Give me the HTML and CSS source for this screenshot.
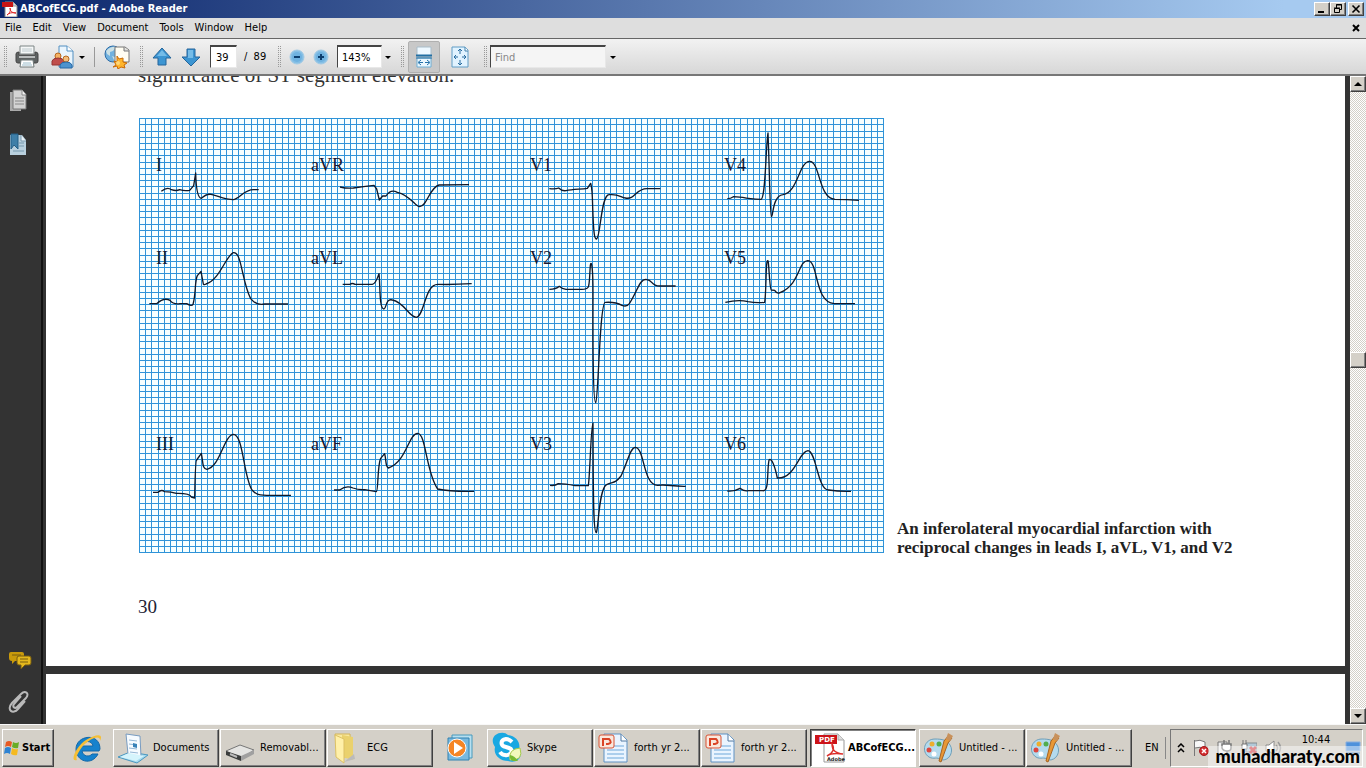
FILE: index.html
```html
<!DOCTYPE html>
<html lang="en">
<head>
<meta charset="utf-8">
<title>ABCofECG.pdf - Adobe Reader</title>
<link rel="stylesheet" href="styles.css">
</head>
<body>
<header class="titlebar">
  <svg class="title-icon" width="16" height="16" viewBox="0 0 16 16" aria-hidden="true"><path d="M3 1h8l4 4v11H3z" fill="#fff" stroke="#888"/><path d="M11 1v4h4" fill="#ddd" stroke="#999"/><path d="M0 1h11v5H0z" fill="#c81414"/><path d="M5 14c3-2 4-5 3-7 0 3 2 5 6 5-4-1-7 0-9 2" fill="none" stroke="#d22"/></svg>
  <h1 class="title">ABCofECG.pdf - Adobe Reader</h1>
  <div class="window-buttons">
    <button class="win-btn" aria-label="Minimize"><svg width="12" height="10" viewBox="0 0 12 10"><path d="M2 7h6v2H2z"/></svg></button>
    <button class="win-btn" aria-label="Restore"><svg width="12" height="10" viewBox="0 0 12 10"><path d="M4.500 4V.5h5v5H8M4 1h6M2.500 4.500h5v4h-5zM2 4h6" fill="none" stroke="#000"/></svg></button>
    <button class="win-btn win-close" aria-label="Close"><svg width="12" height="10" viewBox="0 0 12 10"><path d="M2.500 1.500l7 7M9.500 1.500l-7 7" stroke="#000" stroke-width="1.600"/></svg></button>
  </div>
</header>
<nav class="menubar">
  <button>File</button><button>Edit</button><button>View</button><button>Document</button><button>Tools</button><button>Window</button><button>Help</button>
  <button class="doc-close" aria-label="Close document"><svg width="8" height="8" viewBox="0 0 8 8"><path d="M1 1l6 6M7 1L1 7" stroke="#000" stroke-width="2"/></svg></button>
</nav>
<div class="toolbar">
  <span class="grip"></span>
  <button class="tool print" aria-label="Print"><svg width="24" height="24" viewBox="0 0 24 24"><path d="M5 1h14v8H5z" fill="#f5f7f7" stroke="#7c8585"/><path d="M7 4h10M7 6h10" stroke="#bcc8cc"/><path d="M1 9q0-2 3-2v3h16V7q3 0 3 2v7q0 2-2 2H3q-2 0-2-2z" fill="#5e6262" stroke="#444"/><path d="M4 12h16" stroke="#b9bcbc" stroke-width="2"/><path d="M6 15h12l1 7H5z" fill="#fff" stroke="#6f7878"/><path d="M8 18h8M7 20h10" stroke="#9bbccb"/></svg></button>
  <button class="tool share" aria-label="Collaborate"><svg width="24" height="24" viewBox="0 0 24 24"><path d="M8 1h8l6 5v16H8z" fill="#eaf5fd" stroke="#5290c2"/><path d="M16 1v5h6" fill="#fff" stroke="#5290c2"/><circle cx="7" cy="11" r="3" fill="#f5b263" stroke="#b66720"/><path d="M1 20v-4q1-3 6-3 5 0 6 3v4z" fill="#c04d4b" stroke="#963432"/><circle cx="15" cy="14" r="3" fill="#f2be7c" stroke="#b66720"/><path d="M9 23v-3q1-3 6-3t6 3v3z" fill="#4d93ce" stroke="#2869a6"/></svg></button>
  <button class="drop" aria-label="Collaborate options"></button>
  <span class="divider"></span>
  <button class="tool globe" aria-label="Online services"><svg width="26" height="24" viewBox="0 0 26 24"><circle cx="9" cy="9" r="8" fill="#70b1df" stroke="#2d6ba6"/><path d="M2 6q5-5 10-4l-3 4-3 1v4l-3-2zM8 11l5 2-2 4z" fill="#cbe0e5"/><path d="M11 2h10l4 3v12H11z" fill="#fffdf2" stroke="#777"/><path d="M20 2v4h5" fill="#ddd" stroke="#777"/><path d="M13 11l2 3 4-1v4l4 1-3 2 1 3-4-1-3 2-1-3-4 1 3-2-2-4 3 1z" fill="#ffb52c" stroke="#c96a07"/><circle cx="14" cy="18" r="2" fill="#ffd779"/></svg></button>
  <span class="grip"></span>
  <button class="tool arrow-tool" aria-label="Previous page"><svg width="20" height="20" viewBox="0 0 20 20"><path d="M10 1l9 10h-5v7H6v-7H1z" fill="#3c95d2" stroke="#24659b"/><path d="M10 3l5 6H5z" fill="#75bce8"/></svg></button>
  <button class="tool arrow-tool" aria-label="Next page"><svg width="20" height="20" viewBox="0 0 20 20"><path d="M10 19l9-9h-5V2H6v8H1z" fill="#3c95d2" stroke="#24659b"/><path d="M7 3h5v8H4h3z" fill="#75bce8"/></svg></button>
  <input class="field page-no" aria-label="Page number" value="39">
  <span class="page-total">/&nbsp; 89</span>
  <span class="grip"></span>
  <button class="tool zoom-tool" aria-label="Zoom out"><svg width="16" height="16" viewBox="0 0 16 16"><circle cx="8" cy="8" r="7" fill="#85bfe5" stroke="#a3cbe5"/><circle cx="8" cy="8" r="5" fill="#6fb2e0"/><path d="M5 8h6" stroke="#0c3e6e" stroke-width="2"/></svg></button>
  <button class="tool zoom-tool" aria-label="Zoom in"><svg width="16" height="16" viewBox="0 0 16 16"><circle cx="8" cy="8" r="7" fill="#85bfe5" stroke="#a3cbe5"/><circle cx="8" cy="8" r="5" fill="#6fb2e0"/><path d="M5 8h6M8 5v6" stroke="#0c3e6e" stroke-width="2"/></svg></button>
  <input class="field zoom-level" aria-label="Zoom level" value="143%">
  <button class="drop" aria-label="Zoom levels"></button>
  <span class="grip"></span>
  <button class="tool fit-width" aria-label="Fit width"><svg width="18" height="22" viewBox="0 0 18 22"><path d="M2 1h14v9H2z" fill="#eef8ff" stroke="#a9bdca"/><path d="M1 9.500h16" stroke="#226fa3" stroke-width="2"/><path d="M2 12h14v9H2z" fill="#eaf7ff" stroke="#6faed4"/><path d="M1 12h16" stroke="#226fa3"/><path d="M4 16.500h4M10 16.500h4M6 14l-3 2.500 3 2.500M12 14l3 2.500-3 2.500" fill="none" stroke="#2673ab"/></svg></button>
  <button class="tool fit-page" aria-label="Fit page"><svg width="18" height="22" viewBox="0 0 18 22"><path d="M1 1h13l3 3v17H1z" fill="#e1f3ff" stroke="#609dc6"/><path d="M14 1v4h3" fill="#fff" stroke="#3e80ad"/><path d="M9 3v5M9 14v5M3 11h4M11 11h4M7 5l2-2 2 2M7 17l2 2 2-2M5 9l-2 2 2 2M13 9l2 2-2 2" fill="none" stroke="#286c9f"/></svg></button>
  <span class="grip"></span>
  <input class="field find" aria-label="Find" placeholder="Find">
  <button class="drop" aria-label="Find options"></button>
</div>
<main class="workspace">
  <aside class="sidebar">
    <button aria-label="Pages"><svg width="20" height="24" viewBox="0 0 20 24"><path d="M2 3h11v19H2z" fill="#aaa"/><path d="M5 1h9l4 4v15H5z" fill="#d3d3d3" stroke="#777"/><path d="M14 1v5h4" fill="#f3f3f3" stroke="#888"/><path d="M7 9h9M7 12h9M7 15h9" stroke="#888"/></svg></button>
    <button aria-label="Bookmarks"><svg width="20" height="24" viewBox="0 0 20 24"><path d="M2 2h12l4 5v15H2z" fill="#b9d0de"/><path d="M13 2v6h5" fill="#eaf2f7" stroke="#7898ac"/><path d="M11 10h5M11 13h5M5 18h11" stroke="#7799ae"/><path d="M3 1h7v15l-4-4-3 4z" fill="#3f7fa8" stroke="#255e85"/></svg></button>
    <button class="comments" aria-label="Comments"><svg width="24" height="20" viewBox="0 0 24 20"><path d="M3 2h11q2 0 2 2v5q0 2-2 2H7l-3 3v-3q-3 0-3-3V4q0-2 2-2z" fill="#c99a0b"/><path d="M11 6h10q2 0 2 2v5q0 2-2 2h-4l-4 4v-4h-2q-2 0-2-2V8q0-2 2-2z" fill="#e4b81d" stroke="#755b12"/><path d="M4 5h9M12 9h8M12 12h8" stroke="#765c10"/></svg></button>
    <button aria-label="Attachments"><svg width="22" height="24" viewBox="0 0 22 24"><path d="M13 6l-7 8c-2 3 1 5 3 3l9-9c4-5-1-8-5-4L4 13c-6 7 1 12 6 6l7-8" fill="none" stroke="#b9b9b9" stroke-width="2"/></svg></button>
  </aside>
  <div class="document">
    <article class="page first-page">
      <p class="body-text">significance of ST segment elevation.</p>
      <figure class="figure">
        <svg class="ecg" width="745" height="435" viewBox="0 0 745 435" role="img" aria-label="Twelve-lead electrocardiogram">
          <defs><pattern id="grid" width="31" height="31" patternUnits="userSpaceOnUse"><rect width="31" height="31" fill="#f6ffff"/><path d="M.5 0v31M6.500 0v31M12.500 0v31M19.500 0v31M25.500 0v31M0 .5h31M0 6.500h31M0 13.500h31M0 19.500h31M0 25.500h31" stroke="#2f93d8"/></pattern></defs>
          <rect width="745" height="435" fill="url(#grid)"/>
          <g class="trace">
            <g transform="translate(-9 -8) scale(.33333)">
              <path d="M94 244q18-15 30-5 15 5 25 0 15 5 30 2l12-14 6-38q2 75 17 76 15-14 29-12c20 4 40 16 68 16 20-4 30-30 60-30h15"/>
              <path d="M630 231q20 5 40 3 30-5 62-8l8 11 8 33 10-12 10 0q14-22 34-11c40 9 55 44 67 43 23-2 29-57 58-65q45-1 90-1"/>
              <path d="M58 581h22q22-20 40-10 10 13 30 10h20q15 9 19 2c9-30 5-70 13-86l11-13 7 38q3 4 8 0c40-11 60-85 82-94 25-5 25 85 52 138q18 22 42 16h70"/>
              <path d="M638 523h22q7-5 15 0h52q10-1 20-32c4 30 0 107 15 106 8-3 5-33 25-27 35 5 50 52 72 52 25-5 25-100 65-99 30 1 50 1 101-2"/>
            </g>
            <g transform="translate(371 -8) scale(.33333)">
              <path d="M118 236q20 2 28-2 10 10 22 8c20-5 40-4 64-7l10-15q5 15 6 70c3 90 6 97 12 97 12-7 13-136 38-133 30-3 35 10 48 10 30 6 30-28 65-28h40"/>
              <path d="M118 538q20 0 30-9 8 8 20 9h45c30 1 23-7 28-72 4-20 8 15 8 82 0 40-2 330 8 330 8-5 12-302 29-301q30-2 50 9 14 6 22-5c25-38 30-73 50-73 24 2 12 21 43 20h46"/>
              <path d="M652 266q10 0 18-6l28 2q20 5 55 6c14-3 14-158 21-199 4 90 6 250 10 251 6 0 3-62 35-66 45-7 48-99 80-100 32 1 26 112 76 114q35 0 72 3"/>
              <path d="M646 577q40-9 68-2 25 5 50 2c5-25 3-128 9-125 4-5 5 85 11 88l10 1q7 12 16 7c61-25 54-95 83-96 33 0 19 125 80 129h62"/>
            </g>
            <g transform="translate(-9 217) scale(.33333)">
              <path d="M69 472h15q10-10 20-2 20 0 35 5 40-1 45 11l10 3q2-112 6-114l14-20c6 30 2 45 17 48 40-8 50-101 79-105 30 0 30 125 56 167 18 20 30 14 44 16h73"/>
              <path d="M612 465h17q20-15 40-6 15 6 35 5l35 6c6 0 3-78 13-100l12-14c6 25 1 35 11 43 55-19 60-102 88-104 25 0 25 118 60 167 35 8 68 7 109 7"/>
            </g>
            <g transform="translate(371 217) scale(.33333)">
              <path d="M120 451q15 2 25-5 20 0 50 6h40c5-30 8-188 14-188 1 150-1 328 10 329 7-15 7-132 31-144 20-9 25-3 43-26 20-41 27-84 42-86 30 0 22 112 68 114 30-4 40 4 84 3"/>
              <path d="M652 468q22 2 38-8 12 10 25 7h43c20 4 12-52 19-92 8-8 18 20 25 54 55 2 64-80 92-82 25 1 29 120 62 118q30 5 67 4"/>
            </g>
          </g>
          <g class="lead"><text x="17" y="53">I</text><text x="172" y="53">aVR</text><text x="391" y="53">V1</text><text x="585" y="53">V4</text><text x="17" y="146">II</text><text x="172" y="146">aVL</text><text x="391" y="146">V2</text><text x="585" y="146">V5</text><text x="17" y="332">III</text><text x="172" y="332">aVF</text><text x="391" y="332">V3</text><text x="585" y="332">V6</text></g>
        </svg>
        <figcaption>An inferolateral myocardial infarction with<br>reciprocal changes in leads I, aVL, V1, and V2</figcaption>
      </figure>
      <p class="page-number">30</p>
    </article>
    <article class="page next-page"></article>
  </div>
  <div class="scrollbar">
    <button aria-label="Scroll up"><svg width="8" height="4" viewBox="0 0 8 4"><path d="M4 0l4 4H0z"/></svg></button>
    <span class="track above"></span><button aria-label="Scroll position"></button><span class="track below"></span>
    <button aria-label="Scroll down"><svg width="8" height="4" viewBox="0 0 8 4"><path d="M0 0h8L4 4z"/></svg></button>
  </div>
</main>
<footer class="taskbar">
  <button class="task start"><svg width="17" height="18" viewBox="0 0 17 18"><path d="M2 3q3-2 6 0L7 8q-3-2-6 0z" fill="#e75a23"/><path d="M9 3q3 2 6 0l-1 6q-3 1-6-1z" fill="#69ad27"/><path d="M1 9q3-2 6 0l-1 6q-3-2-6 0z" fill="#2e83d2"/><path d="M8 9q3 2 6 1l-1 6q-3 1-6-1z" fill="#f5ba20"/></svg>Start</button>
  <button class="quick ie" aria-label="Internet Explorer"><svg width="32" height="32" viewBox="0 0 32 32"><path d="M27 19H10c1 6 8 6 10 3h6C20 34 4 30 4 17 4 3 28 0 28 17zM10 14h11c-1-6-10-6-11 0z" fill="#1682cd" stroke="#1468a9"/><path d="M5 28C-3 31 4 14 14 8S32 1 28 9c1-8-14-1-20 9-4 6-4 9-3 10z" fill="#f5bf36"/></svg></button>
  <button class="task"><svg width="32" height="32" viewBox="0 0 32 32"><path d="M1 25l12-5 18 3-11 8z" fill="#a7dbf0" stroke="#4b97bf"/><path d="M9 2l14 2 1 21-13-3z" fill="#f6fbff" stroke="#799cc1"/><path d="M12 8l8 1M12 12l8 1M12 16l8 1M13 20l8 1" stroke="#94b7d6"/><path d="M16 11l4 1v4l-4-1z" fill="#3882b8"/><path d="M3 25l9-4 15 3-8 5z" fill="#d5f4fc"/></svg>Documents</button>
  <button class="task"><svg width="32" height="32" viewBox="0 0 32 32"><path d="M2 19l14-6 14 5-13 9z" fill="#e4e4e2" stroke="#777"/><path d="M2 19l15 5v5L2 23z" fill="#3b3d3d"/><path d="M17 24l13-6v4l-13 7z" fill="#a0a0a0"/><path d="M6 22l7 3" stroke="#bbb" stroke-width="2"/></svg>Removabl...</button>
  <button class="task"><svg width="32" height="32" viewBox="0 0 32 32"><path d="M4 2h15l1 23H7z" fill="#f9e99e" stroke="#d3b459"/><path d="M11 3l11 2v23l-11-3z" fill="#ead16d"/><path d="M4 3l9 4v24l-8-6z" fill="#fff0a9" stroke="#dcc165"/><path d="M13 30l11-3-1-5" fill="#bbb"/></svg>ECG</button>
  <button class="quick media" aria-label="Windows Media Player"><svg width="28" height="28" viewBox="0 0 28 28"><path d="M6 1h20v23H6z" fill="#b8dfef" stroke="#469abd"/><path d="M2 4h21v22H2z" fill="#78b9df" stroke="#3082b1"/><circle cx="11" cy="14" r="9" fill="#f58525" stroke="#fff"/><path d="M8 8l9 6-9 6z" fill="#fff"/></svg></button>
  <button class="task"><svg width="32" height="32" viewBox="0 0 32 32"><path d="M9 1q5-1 8 2c8 1 13 7 11 15 5 8-3 14-11 11C9 29 2 23 4 15-1 8 3 2 9 1z" fill="#19a8e2"/><path d="M21 10q-3-3-6-3c-6 1-6 7 0 8l3 1c6 2 1 8-4 7q-3 0-5-3" fill="none" stroke="#fff" stroke-width="4"/><path d="M19 28q-2-11 10-12 4 13-10 12" fill="#f2f8bd" stroke="#a8cb4c"/><path d="M19 23q5 1 8 6h-5q-4-2-3-6" fill="#77ba32"/></svg>Skype</button>
  <button class="task"><svg width="32" height="32" viewBox="0 0 32 32"><path d="M6 2h17l6 6v22H6z" fill="#eaf4ff" stroke="#5e91c3"/><path d="M23 2v7h6" fill="#fff" stroke="#5079a2"/><path d="M9 14h17M9 18h17M9 22h17M9 26h17" stroke="#6fa8da"/><rect x="1" y="3" width="15" height="13" rx="2" fill="#fae8dd" stroke="#d85233"/><path d="M5 14V7h6q4 4-1 5H8" fill="none" stroke="#da4426" stroke-width="2"/></svg>forth yr 2...</button>
  <button class="task"><svg width="32" height="32" viewBox="0 0 32 32"><path d="M6 2h17l6 6v22H6z" fill="#eaf4ff" stroke="#5e91c3"/><path d="M23 2v7h6" fill="#fff" stroke="#5079a2"/><path d="M9 14h17M9 18h17M9 22h17M9 26h17" stroke="#6fa8da"/><rect x="1" y="3" width="15" height="13" rx="2" fill="#fae8dd" stroke="#d85233"/><path d="M5 14V7h6q4 4-1 5H8" fill="none" stroke="#da4426" stroke-width="2"/></svg>forth yr 2...</button>
  <button class="task active"><svg width="32" height="32" viewBox="0 0 32 32"><path d="M10 2h14l6 6v22H10z" fill="#fff" stroke="#999"/><path d="M24 2v6h6" fill="#ddd" stroke="#aaa"/><path d="M1 3h22v9H1z" fill="#cc1319"/><path d="M13 24c6-3 8-7 5-12 0 7 4 9 11 10-6-1-12-1-16 2" fill="none" stroke="#dc302d" stroke-width="1.500"/><text x="5" y="10" class="pdf-mark">PDF</text><text x="13" y="29" class="adobe-mark">Adobe</text></svg>ABCofECG...</button>
  <button class="task"><svg width="32" height="32" viewBox="0 0 32 32"><path d="M12 7C1 7-2 20 6 25c5 3 8-1 12 3 9 1 13-9 9-15-3-5-8-6-15-6z" fill="#b4daed" stroke="#6e9fb9"/><circle cx="6" cy="18" r="2.500" fill="#de463e"/><circle cx="9" cy="12" r="2.500" fill="#edad2c"/><circle cx="16" cy="12" r="2.500" fill="#51ad4e"/><circle cx="11" cy="22" r="2.500" fill="#fff"/><path d="M26 3l3 3-4 5-7 19-2-1 5-20z" fill="#e89836" stroke="#a56423"/><path d="M25 1l5 3-3 5-4-2z" fill="#c8915b"/></svg>Untitled - ...</button>
  <button class="task"><svg width="32" height="32" viewBox="0 0 32 32"><path d="M12 7C1 7-2 20 6 25c5 3 8-1 12 3 9 1 13-9 9-15-3-5-8-6-15-6z" fill="#b4daed" stroke="#6e9fb9"/><circle cx="6" cy="18" r="2.500" fill="#de463e"/><circle cx="9" cy="12" r="2.500" fill="#edad2c"/><circle cx="16" cy="12" r="2.500" fill="#51ad4e"/><circle cx="11" cy="22" r="2.500" fill="#fff"/><path d="M26 3l3 3-4 5-7 19-2-1 5-20z" fill="#e89836" stroke="#a56423"/><path d="M25 1l5 3-3 5-4-2z" fill="#c8915b"/></svg>Untitled - ...</button>
  <span class="language">EN</span>
  <div class="tray">
    <button class="chevron" aria-label="Hidden icons"><svg width="8" height="10" viewBox="0 0 8 10"><path d="M1 4l3-3 3 3M1 9l3-3 3 3" fill="none" stroke="#000" stroke-width="1.500"/></svg></button>
    <svg width="16" height="18" viewBox="0 0 16 18"><path d="M1.500 1v16M2 2q5-2 10 1v7q-5-3-10-1" fill="#f8f8f8" stroke="#777"/><circle cx="11" cy="12" r="4.500" fill="#d22d30" stroke="#a6191b"/><path d="M9 10l4 4M13 10l-4 4" stroke="#fff" stroke-width="1.500"/></svg>
    <svg width="16" height="18" viewBox="0 0 16 18"><path d="M1 3h9v14H1z" fill="#eee" stroke="#777"/><path d="M7 1v4M12 1v4M5 5h9v4q0 3-4 3t-5-3zM10 12v5" fill="#fff" stroke="#777" stroke-width="1.500"/></svg>
    <svg width="16" height="18" viewBox="0 0 16 18"><path d="M5 4h11v9H5zM7 15h7" fill="#b2c9d8" stroke="#848c90"/><path d="M2 1v4M5 1v4M1 5h5v5H1zM3 10v4" fill="#fff" stroke="#777"/><path d="M9 8l6 6M15 8l-6 6" stroke="#cd3438" stroke-width="3"/></svg>
    <svg width="17" height="18" viewBox="0 0 17 18"><path d="M1 6h3l5-4v14l-5-4H1z" fill="#fff" stroke="#8b8b8b"/><path d="M11 6q3 3 0 6M13 3q5 6 0 12" fill="none" stroke="#999" stroke-width="1.500"/></svg>
    <time class="clock">10:44</time>
    <svg class="desktop" width="16" height="14" viewBox="0 0 16 14"><path d="M1 1h14v9H1z" fill="#4e91db" stroke="#87aee0"/><path d="M1 12h14" stroke="#789abf" stroke-width="2"/></svg>
  </div>
  <span class="watermark">muhadharaty.com</span>
</footer>
</body>
</html>
```
FILE: styles.css
```css
* { box-sizing: border-box; }
body { margin: 0; height: 100vh; display: flex; flex-direction: column; overflow: hidden; font: 11px/14px "DejaVu Sans Condensed", "DejaVu Sans", sans-serif; color: #000; background: #333; }
button, input { font: inherit; color: inherit; border: 0; padding: 0; margin: 0; }
button { background: none; }
svg { display: block; flex: none; }
.titlebar { height: 18px; flex: none; display: flex; align-items: center; padding: 0 2px; background: linear-gradient(90deg, #0a246a, #a6caf0 94%); color: #fff; }
.title { font: bold 11px/16px "DejaVu Sans Condensed", "DejaVu Sans", sans-serif; margin: 0 0 0 2px; flex: 1; }
.window-buttons { display: flex; }
.win-btn { width: 16px; height: 14px; display: grid; place-items: center; background: #d4d0c8; border: 1px solid; border-color: #fff #404040 #404040 #fff; box-shadow: inset -1px -1px #808080; }
.win-close { margin-left: 2px; }
.menubar { height: 20px; flex: none; display: flex; align-items: center; gap: 11px; padding: 0 6px 0 5px; background: #dedede; }
.doc-close { margin-left: auto; }
.toolbar { height: 38px; flex: none; display: flex; align-items: center; padding-left: 3px; border-top: 1px solid #666; border-bottom: 2px solid #777; background: linear-gradient(#f2f2f2, #d7d7d7); }
.grip { width: 4px; height: 22px; background: conic-gradient(#999 25%, transparent 0) 0 0 / 2px 2px; }
.tool { height: 32px; display: grid; place-items: center; }
.print { width: 24px; margin-left: 8px; }
.share { width: 24px; margin-left: 12px; }
.globe { width: 26px; margin: 0 9px; }
.divider { width: 1px; height: 20px; margin-left: 9px; background: #999; }
.drop { width: 0; height: 0; margin: 2px 0 0 4px; border: 3px solid transparent; border-top-color: #000; border-bottom-width: 0; }
.arrow-tool { width: 20px; margin-left: 9px; }
.field { height: 23px; background: #fff; border: 1px solid; border-color: #444 #e8e8e8 #e8e8e8 #444; border-top-width: 2px; padding: 0 4px; border-radius: 0; }
.page-no { width: 27px; margin-left: 9px; padding-left: 5px; }
.page-total { width: 33px; margin-left: 7px; }
.zoom-tool { width: 16px; margin-left: 8px; }
.zoom-level { width: 45px; margin-left: 8px; }
.zoom-level + .drop { margin-left: 3px; }
.zoom-level + .drop + .grip { margin-left: 9px; }
.fit-width { width: 32px; margin-left: 4px; background: #c8c8c8; border: 1px solid #b0b0b0; border-radius: 2px; }
.fit-page { width: 18px; margin: 0 14px 0 11px; }
.find { width: 116px; margin-left: 3px; background: #f5f5f5; }
.find::placeholder { color: #888; opacity: 1; }
.workspace { flex: 1; min-height: 0; display: flex; background: #333; }
.sidebar { width: 43px; flex: none; display: flex; flex-direction: column; padding: 13px 0 10px 8px; gap: 20px; border-right: 2px solid #111; align-items: flex-start; }
.comments { margin-top: auto; }
.document { flex: 1; min-width: 0; margin: 0 5px 0 3px; display: flex; flex-direction: column; gap: 8px; overflow: hidden; }
.page { background: #fff; font-family: "Liberation Serif", serif; }
.first-page { flex: none; padding: 0 0 49px 92px; }
.next-page { flex: 1; }
.body-text { margin: -11px 0 33px; font-size: 21px; line-height: 20px; color: #333; }
.figure { margin: 0 0 0 1px; display: flex; align-items: flex-end; gap: 13px; }
figcaption { font-size: 17px; line-height: 19px; font-weight: bold; color: #222; margin-bottom: -4px; }
.trace { fill: none; stroke: #101828; stroke-width: 4; stroke-linejoin: round; }
.lead { font: 18px "Liberation Serif", serif; fill: #171730; }
.page-number { margin: 44px 0 0; font-size: 19px; line-height: 20px; color: #223; }
.scrollbar { width: 16px; flex: none; display: flex; flex-direction: column; }
.scrollbar button { height: 16px; flex: none; display: grid; place-items: center; background: #d4d0c8; border: 1px solid; border-color: #fff #404040 #404040 #fff; box-shadow: inset -1px -1px #808080; }
.track { background: repeating-conic-gradient(#fff 0 25%, #d4d0c8 0 50%) 0 0 / 2px 2px; }
.above { flex: 261; }
.below { flex: 342; }
.taskbar { height: 44px; flex: none; display: flex; align-items: center; gap: 1px; padding: 2px 3px 0 2px; background: #d4d0c8; border-top: 1px solid #f8f8f8; position: relative; }
.task { width: 106px; height: 38px; flex: 0 1 auto; min-width: 0; display: flex; align-items: center; gap: 4px; padding-left: 3px; white-space: nowrap; overflow: hidden; border: 1px solid; border-color: #fff #404040 #404040 #fff; box-shadow: inset -1px -1px #808080; }
.start { width: 52px; gap: 1px; padding-left: 1px; font-weight: bold; }
.quick { display: grid; place-items: center; flex: none; }
.ie { width: 32px; margin: 0 8px 0 17px; }
.media { width: 28px; margin: 0 12px; }
.active { background: #fff; border-color: #404040 #fff #fff #404040; box-shadow: inset 1px 1px #808080; font-weight: bold; gap: 2px; margin: 0 2px; }
.pdf-mark { font: bold 7px "DejaVu Sans", sans-serif; fill: #fff; }
.adobe-mark { font: bold 5px "DejaVu Sans", sans-serif; fill: #222; }
.language { margin-left: 12px; padding-right: 6px; border-right: 1px solid #888; line-height: 22px; }
.tray { flex: 1; height: 38px; display: flex; align-items: center; gap: 8px; margin-left: 3px; padding: 0 1px 0 6px; border: 1px solid; border-color: #777 #fff #fff #777; }
.clock { align-self: flex-start; padding: 3px 0 0; margin-left: 12px; }
.desktop { margin-left: auto; }
.watermark { position: absolute; right: 0; bottom: 0; padding: 0 6px 2px 8px; background: rgb(255 255 255 / 45%); font: 900 18px/20px Lato, sans-serif; }
```
